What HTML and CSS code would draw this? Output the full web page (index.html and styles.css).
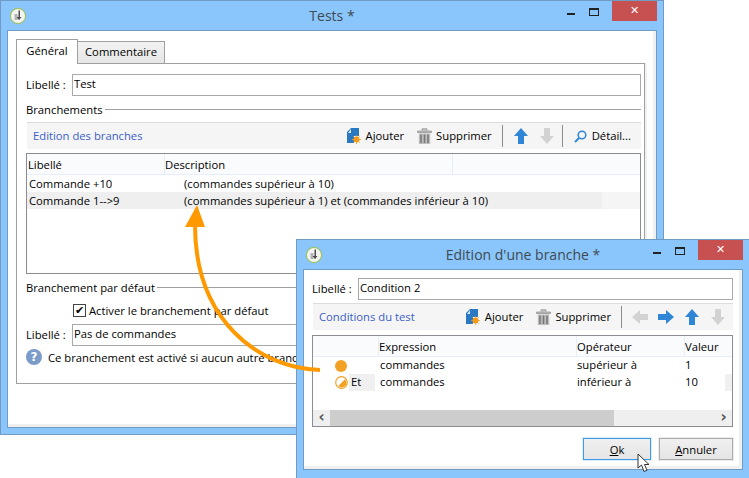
FILE: index.html
```html
<!DOCTYPE html>
<html lang="fr">
<head>
    <meta charset="UTF-8">
    <title>Tests</title>
    <link rel="stylesheet" href="styles.css">
</head>
<body>
    <svg class="defs" width="0" height="0">
        <symbol id="appicon" viewBox="0 0 18 18">
            <circle cx="9" cy="9" r="7.6" fill="#f4f4f0" stroke="#9cc26a" stroke-width="1.2"/>
            <path d="M5.500 7h3v6h-3z" fill="#b4b4b4"/>
            <path d="M9.500 3.500h1.500v9H9.500zM7.500 10h5l-2.500 3z" fill="#4c4c4c"/>
        </symbol>
        <symbol id="add" viewBox="0 0 14 16">
            <path d="M0 4 4 0h8v8H7v7H0z" fill="#2b78c2"/>
            <path d="M4 1v4H1z" fill="#d6e6f5"/>
            <circle cx="9.500" cy="11.500" r="3" fill="#f59a1c"/>
            <path d="M9.500 7v9M5 11.500h9M6.400 8.400l6.200 6.200M12.600 8.400l-6.200 6.200" stroke="#f59a1c" stroke-width=".8"/>
        </symbol>
        <symbol id="trash" viewBox="0 0 15 16">
            <path d="M5 2.500V.8h5v1.700M.5 3h14v1.500H.5z" fill="#c4c4c4" stroke="#8a8a8a" stroke-width=".7"/>
            <path d="M1.800 5.500h11.400V16H1.800z" fill="#bdbdbd"/>
            <path d="M4 6.500v8.500M7.500 6.500v8.500M11 6.500v8.500" stroke="#767676" stroke-width="1.500"/>
        </symbol>
        <symbol id="arrow-up" viewBox="0 0 16 16">
            <path d="M8 0 15 8H11V16H5V8H1z"/>
        </symbol>
        <symbol id="arrow-right" viewBox="0 0 16 16">
            <path d="M16 8 8 1V5H0V11H8V15z"/>
        </symbol>
        <symbol id="loupe" viewBox="0 0 13 13">
            <circle cx="8" cy="5" r="3.800" fill="none" stroke="#2f86d6" stroke-width="1.500"/>
            <path d="M5 8 1 12" stroke="#2f86d6" stroke-width="2"/>
        </symbol>
        <symbol id="cond-and" viewBox="0 0 13 13">
            <circle cx="6.500" cy="6.500" r="5.800" fill="#fff" stroke="#f2a124" stroke-width="1.200"/>
            <path d="M10 3.300A4.600 4.600 0 0 1 3.300 10z" fill="#f2a124"/>
        </symbol>
    </svg>

    <div class="window window-main">
        <div class="titlebar">
            <svg class="app-icon"><use href="#appicon"/></svg>
            <div class="title">Tests *</div>
            <div class="win-btns">
                <span class="win-min"></span>
                <span class="win-max"></span>
                <span class="win-close">✕</span>
            </div>
        </div>
        <div class="client client-main">
            <div class="tabs">
                <div class="tab tab-on">Général</div>
                <div class="tab">Commentaire</div>
            </div>
            <div class="panel">
                <div class="field first">
                    <label>Libellé :</label>
                    <div class="input">Test</div>
                </div>
                <div class="section">Branchements</div>
                <div class="toolbar">
                    <div class="toolbar-title">Edition des branches</div>
                    <div class="tools tools-main">
                        <svg class="ic-add"><use href="#add"/></svg>
                        <span class="tool-label">Ajouter</span>
                        <svg class="ic-trash"><use href="#trash"/></svg>
                        <span class="tool-label">Supprimer</span>
                        <i class="sep"></i>
                        <svg class="ic-arrow on"><use href="#arrow-up"/></svg>
                        <svg class="ic-arrow off flip"><use href="#arrow-up"/></svg>
                        <i class="sep"></i>
                        <svg class="ic-loupe"><use href="#loupe"/></svg>
                        <span class="tool-label">Détail...</span>
                    </div>
                </div>
                <div class="list list-main">
                    <div class="list-head">
                        <span class="col-a">Libellé</span>
                        <span class="col-b">Description</span>
                        <span class="col-c"></span>
                    </div>
                    <div class="list-row">
                        <span class="col-a">Commande +10</span>
                        <span class="col-b">(commandes supérieur à 10)</span>
                    </div>
                    <div class="list-row row-sel">
                        <span class="col-a">Commande 1--&gt;9</span>
                        <span class="col-b">(commandes supérieur à 1) et (commandes inférieur à 10)</span>
                    </div>
                </div>
                <div class="section">Branchement par défaut</div>
                <div class="check-row">
                    <span class="checkbox">✔</span>
                    <span>Activer le branchement par défaut</span>
                </div>
                <div class="field">
                    <label>Libellé :</label>
                    <div class="input">Pas de commandes</div>
                </div>
                <div class="help-row">
                    <span class="help-icon">?</span>
                    <span>Ce branchement est activé si aucun autre branchement</span>
                </div>
            </div>
        </div>
    </div>

    <div class="window window-edit">
        <div class="titlebar">
            <svg class="app-icon"><use href="#appicon"/></svg>
            <div class="title">Edition d'une branche *</div>
            <div class="win-btns">
                <span class="win-min"></span>
                <span class="win-max"></span>
                <span class="win-close">✕</span>
            </div>
        </div>
        <div class="client client-edit">
            <div class="field first">
                <label>Libellé :</label>
                <div class="input">Condition 2</div>
            </div>
            <div class="toolbar toolbar-edit">
                <div class="toolbar-title">Conditions du test</div>
                <div class="tools tools-edit">
                    <svg class="ic-add"><use href="#add"/></svg>
                    <span class="tool-label">Ajouter</span>
                    <svg class="ic-trash"><use href="#trash"/></svg>
                    <span class="tool-label">Supprimer</span>
                    <i class="sep"></i>
                    <svg class="ic-arrow off flip-h"><use href="#arrow-right"/></svg>
                    <svg class="ic-arrow on"><use href="#arrow-right"/></svg>
                    <svg class="ic-arrow on"><use href="#arrow-up"/></svg>
                    <svg class="ic-arrow off flip"><use href="#arrow-up"/></svg>
                </div>
            </div>
            <div class="list list-edit">
                <div class="list-head">
                    <span class="cell-icon"></span>
                    <span class="cell-expr">Expression</span>
                    <span class="cell-op">Opérateur</span>
                    <span class="cell-val">Valeur</span>
                </div>
                <div class="list-row">
                    <span class="cell-icon"><i class="dot"></i></span>
                    <span class="cell-expr">commandes</span>
                    <span class="cell-op">supérieur à</span>
                    <span class="cell-val">1</span>
                </div>
                <div class="list-row">
                    <span class="cell-icon"><svg class="ic-cond"><use href="#cond-and"/></svg><b class="cell-and">Et</b></span>
                    <span class="cell-expr">commandes</span>
                    <span class="cell-op">inférieur à</span>
                    <span class="cell-val">10</span>
                    <span class="cell-end"></span>
                </div>
                <div class="scrollbar">
                    <span class="sb-btn">‹</span>
                    <span class="sb-thumb"></span>
                    <span class="sb-btn sb-right">›</span>
                </div>
            </div>
            <div class="buttons">
                <button class="btn btn-ok"><u>O</u>k</button>
                <button class="btn"><u>A</u>nnuler</button>
            </div>
        </div>
    </div>

    <svg class="link-arrow" width="749" height="478" viewBox="0 0 749 478">
        <path d="M320 370C258 368 195 320 195 225" fill="none" stroke="#f90" stroke-width="4"/>
        <path d="M197 205 185 227H205z" fill="#f90"/>
    </svg>

    <svg class="cursor" width="14" height="20" viewBox="0 0 14 20">
        <path d="M1 1V15L4.500 12 7 18.500 10 17.300 7.500 11.500H12z" fill="#fff" stroke="#333" stroke-width="1"/>
    </svg>
</body>
</html>
```

FILE: styles.css
```css
* {
    box-sizing: border-box;
}

body {
    margin: 0;
    width: 749px;
    height: 478px;
    position: relative;
    overflow: hidden;
    background: #fff;
    font-family: "Open Sans", sans-serif;
    font-size: 11.25px;
    color: #000;
}

.defs {
    position: absolute;
}

.window {
    position: absolute;
    background: #8ac6fb;
    border: 1px solid #6f9bc4;
    padding: 0 6px 6px;
    display: flex;
    flex-direction: column;
}

.window-main {
    left: 0;
    top: 0;
    width: 664px;
    height: 435px;
}

.window-edit {
    left: 296px;
    top: 239px;
    width: 453px;
    height: 239px;
    border-right: none;
    border-bottom: none;
    padding-bottom: 8px;
}

.titlebar {
    height: 29px;
    flex: none;
    display: flex;
    align-items: flex-start;
    position: relative;
}

.app-icon {
    position: absolute;
    left: 2px;
    top: 6px;
    width: 18px;
    height: 18px;
}

.title {
    flex: 1;
    text-align: center;
    font-size: 14px;
    line-height: 30px;
    color: #404a52;
}

.win-btns {
    position: absolute;
    right: 0;
    top: 0;
    display: flex;
    align-items: flex-start;
}

.win-min {
    width: 8px;
    height: 2px;
    background: #222;
    margin: 12px 14px 0 0;
}

.win-max {
    width: 10px;
    height: 8px;
    border: 1px solid #222;
    border-top-width: 2px;
    margin: 7px 13px 0 0;
}

.win-close {
    width: 45px;
    height: 20px;
    background: #c75050;
    color: #fff;
    font: bold 11px/20px "DejaVu Sans", sans-serif;
    text-align: center;
}

.client {
    flex: 1;
    background: #fff;
    border: 1px solid #6f9bc4;
    box-shadow: inset -3px -3px 0 #f0f0f0;
}

.client-main {
    padding: 8px 11px 0 8px;
}

.client-edit {
    padding: 8px 9px 0 8px;
}

.tabs {
    display: flex;
    align-items: flex-end;
    height: 24px;
}

.tab {
    height: 22px;
    width: 87px;
    border: 1px solid #a0a0a0;
    border-left: none;
    border-bottom: none;
    background: linear-gradient(#f2f2f2, #e6e6e6);
    text-align: center;
    line-height: 20px;
}

.tab-on {
    height: 25px;
    width: 62px;
    margin-bottom: -1px;
    border-left: 1px solid #a0a0a0;
    background: #fff;
    position: relative;
    z-index: 1;
    line-height: 22px;
}

.panel {
    height: 321px;
    width: 629px;
    border: 1px solid #a0a0a0;
    box-shadow: 2px 0 0 #f0f0f0;
    padding: 10px 3px 0 9px;
}

.field {
    display: flex;
    align-items: center;
    height: 22px;
    margin-top: 6px;
}

.field.first {
    margin-top: 0;
}

.field label {
    width: 46px;
    flex: none;
    padding-bottom: 2px;
    white-space: nowrap;
}

.input {
    flex: 1;
    height: 22px;
    border: 1px solid #a9a9a9;
    padding-left: 1px;
    line-height: 18px;
    background: #fff;
}

.section {
    display: flex;
    align-items: center;
    height: 16px;
    margin-top: 5px;
    white-space: nowrap;
}

.section::after {
    content: "";
    flex: 1;
    height: 1px;
    background: #a0a0a0;
    margin-left: 2px;
}

.toolbar {
    display: flex;
    align-items: center;
    height: 27px;
    margin-top: 5px;
    margin-left: 1px;
    padding-left: 6px;
    background: #f5f5f5;
    border-top: 1px solid #dcdcdc;
}

.toolbar-edit {
    margin-top: 3px;
}

.toolbar-title {
    color: #3b5fc8;
    padding-bottom: 2px;
    white-space: nowrap;
}

.tools {
    display: flex;
    align-items: center;
    height: 100%;
    margin-left: auto;
}

.tools-main {
    padding-right: 10px;
}

.tools-edit {
    padding-right: 7px;
}

.tool-label {
    padding-bottom: 2px;
    white-space: nowrap;
}

.ic-add {
    width: 14px;
    height: 16px;
    margin-right: 5px;
}

.ic-trash {
    width: 15px;
    height: 16px;
    margin: 0 4px 0 13px;
}

.sep {
    width: 1px;
    height: 22px;
    background: #8c8c8c;
    margin: 0 10px;
}

.ic-arrow {
    width: 16px;
    height: 16px;
    margin-right: 10px;
}

.ic-arrow:last-child {
    margin-right: 0;
}

.on {
    fill: #2f86d6;
}

.off {
    fill: #d2d2d2;
}

.flip {
    transform: scaleY(-1);
}

.flip-h {
    transform: scaleX(-1);
}

.tools-main .ic-arrow + .sep {
    margin-left: -3px;
    margin-right: 11px;
}

.ic-loupe {
    width: 13px;
    height: 13px;
    margin-right: 5px;
}

.list {
    position: relative;
    border: 1px solid #8c8c96;
    margin-top: 4px;
    background: #fff;
}

.list-main {
    height: 121px;
}

.list-head {
    display: flex;
    height: 21px;
    line-height: 22px;
    background: #fafbfd;
    border-bottom: 1px solid #e6eefa;
}

.list-row {
    display: flex;
    height: 17px;
    line-height: 17px;
}

.list-main .col-a {
    width: 137px;
    padding-left: 1px;
}

.list-main .col-b {
    width: 288px;
    border-left: 1px solid #e6eefa;
}

.list-main .col-c {
    flex: 1;
    border-left: 1px solid #e6eefa;
}

.list-main .list-row .col-a {
    width: 157px;
    padding-left: 2px;
}

.list-main .list-row .col-b {
    border-left: none;
    white-space: nowrap;
}

.row-sel {
    background: linear-gradient(90deg, #efefef 575px, #f5f5f5 575px);
}

.list-edit {
    height: 92px;
    margin-top: 5px;
}

.list-edit .list-row {
    line-height: 15px;
}

.cell-icon {
    width: 66px;
    flex: none;
    display: flex;
    align-items: center;
    padding-left: 22px;
}

.list-head .cell-icon {
    width: 65px;
}

.list-head .cell-expr,
.list-head .cell-op,
.list-head .cell-val {
    border-left: 1px solid #e6eefa;
    padding-left: 0;
}

.cell-expr {
    width: 198px;
    padding-left: 1px;
    flex: none;
}

.cell-op {
    width: 108px;
    flex: none;
}

.cell-val {
    flex: 1;
}

.cell-end {
    width: 7px;
    background: #f0f0f0;
}

.dot {
    width: 12px;
    height: 12px;
    border-radius: 50%;
    background: #f2a124;
}

.ic-cond {
    width: 13px;
    height: 13px;
    flex: none;
}

.cell-and {
    width: 26px;
    height: 17px;
    margin-left: 1px;
    padding-left: 2px;
    background: #f0f0f0;
    font-weight: normal;
}

.scrollbar {
    position: absolute;
    left: 0;
    right: 0;
    bottom: 0;
    height: 16px;
    display: flex;
    background: #efefef;
}

.sb-btn {
    width: 17px;
    flex: none;
    text-align: center;
    font: bold 15px/14px "DejaVu Sans", sans-serif;
    color: #555;
}

.sb-thumb {
    width: 284px;
    background: #cdcdcd;
}

.sb-right {
    margin-left: auto;
}

.buttons {
    display: flex;
    justify-content: flex-end;
    gap: 8px;
    margin-top: 11px;
}

.btn {
    width: 74px;
    height: 22px;
    padding: 0;
    border: 1px solid #acacac;
    box-shadow: 0 0 0 1px #ececec;
    background: linear-gradient(#f0f0f0, #e5e5e5);
    font: inherit;
    color: #000;
}

.btn-ok {
    width: 68px;
    border-color: #3c9be8;
    box-shadow: 0 0 0 1px #dcecf9;
}

.check-row {
    display: flex;
    align-items: center;
    height: 16px;
    margin-top: 7px;
    margin-left: 47px;
    gap: 3px;
}

.checkbox {
    width: 13px;
    height: 13px;
    border: 1px solid #444;
    font: 11px/11px "DejaVu Sans", sans-serif;
    text-align: center;
}

.help-row {
    display: flex;
    align-items: center;
    height: 16px;
    margin-top: 3px;
    gap: 6px;
    white-space: nowrap;
}

.help-icon {
    width: 16px;
    height: 16px;
    border-radius: 50%;
    background: #7b9cc9;
    color: #fff;
    font: bold 12px/16px "DejaVu Sans", sans-serif;
    text-align: center;
    flex: none;
}

.link-arrow {
    position: absolute;
    left: 0;
    top: 0;
    pointer-events: none;
}

.cursor {
    position: absolute;
    left: 637px;
    top: 453px;
}
```
